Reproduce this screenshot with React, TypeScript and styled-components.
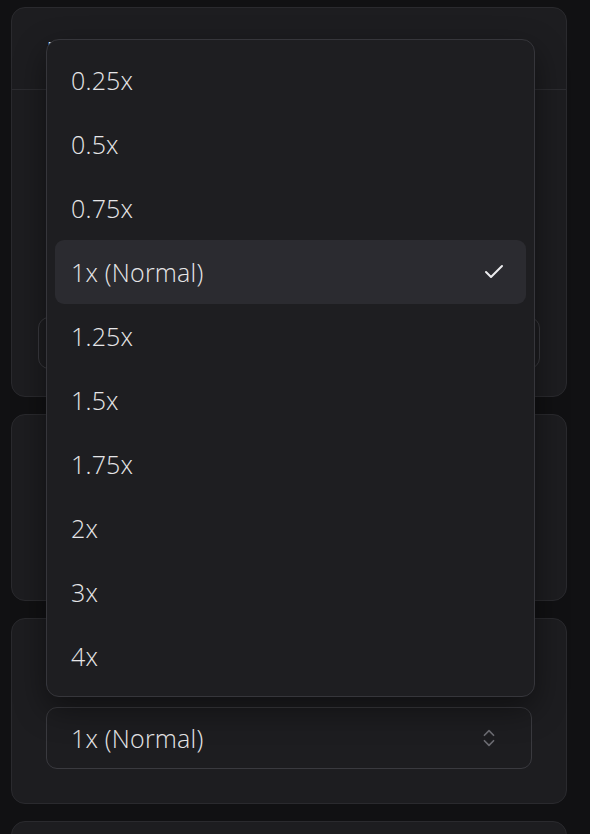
import React, { useState } from 'react';
import styled, { createGlobalStyle } from 'styled-components';
import { Check, ChevronsUpDown } from 'lucide-react';

const GlobalStyle = createGlobalStyle`
  html, body {
    margin: 0;
    padding: 0;
    background: #111113;
    color: #e6e6e8;
    font-family: 'Open Sans', 'Lato', 'Noto Sans', sans-serif;
  }
  #root {
    min-height: 100vh;
  }
`;

const Page = styled.div`
  display: flex;
  flex-direction: column;
  gap: 17px;
  padding: 7px 23px 0 11px;
  height: 834px;
  overflow: hidden;
  box-sizing: border-box;
`;

const Card = styled.section<{ $height: number }>`
  flex: 0 0 auto;
  height: ${({ $height }) => $height}px;
  box-sizing: border-box;
  background: #1d1d20;
  border: 1px solid #2a2a2e;
  border-radius: 14px;
  display: flex;
  flex-direction: column;
`;

const CardHeader = styled.div`
  height: 82px;
  border-bottom: 1px solid #2c2c30;
  padding: 27px 35px 0;
  box-sizing: border-box;
`;

const CardTitle = styled.h2`
  margin: 0;
  font-size: 20px;
  font-weight: 600;
  color: #ffffff;
`;

const CardBody = styled.div<{ $pad: string }>`
  flex: 1;
  display: flex;
  flex-direction: column;
  justify-content: flex-end;
  padding: ${({ $pad }) => $pad};
`;

const FieldLabel = styled.label`
  font-size: 18px;
  font-weight: 600;
  color: #f0f0f2;
  margin-bottom: 16px;
`;

const SelectWrap = styled.div`
  position: relative;
`;

const SelectButton = styled.button<{ $height: number }>`
  width: 100%;
  height: ${({ $height }) => $height}px;
  box-sizing: border-box;
  display: flex;
  align-items: center;
  justify-content: space-between;
  padding: 0 31px 0 24px;
  background: #1d1d20;
  border: 1.5px solid #3a3a3f;
  border-radius: 11px;
  color: #e6e6e8;
  font-family: inherit;
  font-size: 25px;
  font-weight: 300;
  letter-spacing: 0.2px;
  cursor: pointer;
  text-align: left;

  svg {
    color: #6c6c72;
  }
`;

const Listbox = styled.ul`
  position: absolute;
  left: 0;
  right: -3px;
  bottom: calc(100% + 10px);
  margin: 0;
  padding: 8px;
  list-style: none;
  background: #1e1e21;
  border: 1px solid #36363b;
  border-radius: 13px;
  box-shadow: 0 12px 32px rgba(0, 0, 0, 0.45);
  z-index: 10;
`;

const Option = styled.li<{ $selected: boolean }>`
  height: 64px;
  display: flex;
  align-items: center;
  justify-content: space-between;
  padding: 0 20px 0 16px;
  border-radius: 9px;
  font-size: 25px;
  font-weight: 300;
  letter-spacing: 0.2px;
  color: #e6e6e8;
  background: ${({ $selected }) => ($selected ? '#2b2b30' : 'transparent')};
  cursor: pointer;

  &:hover {
    background: #2b2b30;
  }
`;

const speeds = ['0.25x', '0.5x', '0.75x', '1x (Normal)', '1.25x', '1.5x', '1.75x', '2x', '3x', '4x'];

const App: React.FC = () => {
  const [speed, setSpeed] = useState('1x (Normal)');
  const [open, setOpen] = useState(true);

  return (
    <>
      <GlobalStyle />
      <Page>
        <Card $height={390}>
          <CardHeader>
            <CardTitle>Playback</CardTitle>
          </CardHeader>
          <CardBody $pad="0 26px 27px 26px">
            <SelectButton $height={52} type="button">
              <span>Auto</span>
              <ChevronsUpDown size={18} strokeWidth={2} />
            </SelectButton>
          </CardBody>
        </Card>

        <Card $height={187} />

        <Card $height={186}>
          <CardBody $pad="0 34px 34px 34px">
            <FieldLabel>Speed</FieldLabel>
            <SelectWrap>
              {open && (
                <Listbox role="listbox">
                  {speeds.map((s) => (
                    <Option
                      key={s}
                      role="option"
                      aria-selected={s === speed}
                      $selected={s === speed}
                      onClick={() => {
                        setSpeed(s);
                        setOpen(false);
                      }}
                    >
                      <span>{s}</span>
                      {s === speed && <Check size={24} strokeWidth={2} color="#ececee" />}
                    </Option>
                  ))}
                </Listbox>
              )}
              <SelectButton $height={62} type="button" onClick={() => setOpen(!open)}>
                <span>{speed}</span>
                <ChevronsUpDown size={22} strokeWidth={1.8} />
              </SelectButton>
            </SelectWrap>
          </CardBody>
        </Card>

        <Card $height={200} />
      </Page>
    </>
  );
};

export default App;
